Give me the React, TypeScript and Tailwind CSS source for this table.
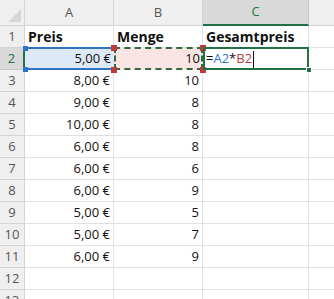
const rows: [string, string][] = [
  ["5,00 €", "10"],
  ["8,00 €", "10"],
  ["9,00 €", "8"],
  ["10,00 €", "8"],
  ["6,00 €", "8"],
  ["6,00 €", "6"],
  ["6,00 €", "9"],
  ["5,00 €", "5"],
  ["5,00 €", "7"],
  ["6,00 €", "9"],
];

const font = { fontFamily: "'Open Sans', 'Liberation Sans', sans-serif" };

function ColHeader({ label, active }: { label: string; active?: boolean }) {
  return (
    <div
      className={
        active
          ? "flex items-center justify-center border-r border-[#c6c6c6] border-b-2 border-b-[#217346] bg-[#d9d9d9] text-[13px] text-[#217346]"
          : "flex items-center justify-center border-r border-b border-[#d4d4d4] bg-[#efefef] text-[13px] text-[#555]"
      }
    >
      {label}
    </div>
  );
}

function RowHeader({ n, active }: { n: number; active?: boolean }) {
  return (
    <div
      className={
        active
          ? "flex items-center justify-center border-b border-[#c6c6c6] border-r-2 border-r-[#217346] bg-[#d9d9d9] text-[13px] text-[#217346]"
          : "flex items-center justify-center border-r border-b border-[#d4d4d4] bg-[#efefef] text-[13px] text-[#555]"
      }
    >
      {n}
    </div>
  );
}

function Cell({ children, right, bold }: { children?: React.ReactNode; right?: boolean; bold?: boolean }) {
  return (
    <div
      className={`flex items-center border-r border-b border-[#e1e1e1] px-[3px] text-[#111] ${
        right ? "justify-end" : "justify-start"
      } ${bold ? "text-[14px] font-bold" : "text-[13px]"}`}
    >
      {children}
    </div>
  );
}

export default function App() {
  return (
    <div className="h-[299px] w-[334px] overflow-hidden bg-white" style={font}>
      <div className="grid grid-cols-[25px_89px_89px_106px_40px] grid-rows-[26px_repeat(13,22px)]">
        {/* select-all corner */}
        <div className="flex items-end justify-end border-r border-b border-[#d4d4d4] bg-[#efefef] p-[3px]">
          <svg width="13" height="13" viewBox="0 0 13 13">
            <polygon points="13,0 13,13 0,13" fill="#d6d6d6" />
          </svg>
        </div>
        <ColHeader label="A" />
        <ColHeader label="B" />
        <ColHeader label="C" active />
        <ColHeader label="" />

        {/* row 1 */}
        <RowHeader n={1} />
        <Cell bold>Preis</Cell>
        <Cell bold>Menge</Cell>
        <Cell bold>Gesamtpreis</Cell>
        <Cell />

        {/* row 2 */}
        <RowHeader n={2} active />
        <div className="relative flex items-center justify-end bg-[#dde9f6] px-[3px] text-[13px] text-[#111]">
          <div className="absolute inset-x-0 -top-px -bottom-0 border-y-2 border-[#2e75c6]" />
          <span className="absolute -left-[2px] -top-[2px] h-[5px] w-[5px] bg-[#2e75c6]" />
          <span className="absolute -left-[2px] -bottom-[2px] h-[5px] w-[5px] bg-[#2e75c6]" />
          <span className="relative">{rows[0][0]}</span>
        </div>
        <div className="relative flex items-center justify-end bg-[#fbe4e4] px-[3px] text-[13px] text-[#111]">
          <div className="absolute inset-0 -top-px border-2 border-dashed border-[#2f6b3a]" />
          <span className="absolute -left-[3px] -top-[3px] h-[6px] w-[6px] bg-[#c0393b]" />
          <span className="absolute -right-[3px] -top-[3px] h-[6px] w-[6px] bg-[#c0393b]" />
          <span className="absolute -left-[3px] -bottom-[3px] h-[6px] w-[6px] bg-[#c0393b]" />
          <span className="absolute -right-[3px] -bottom-[3px] h-[6px] w-[6px] bg-[#c0393b]" />
          <span className="relative">{rows[0][1]}</span>
        </div>
        <div className="relative flex items-center px-[3px] text-[13px] text-[#111]">
          <div className="absolute inset-0 -top-px border-2 border-[#217346]" />
          <span className="absolute -right-[3px] -bottom-[3px] h-[6px] w-[6px] border border-white bg-[#217346]" />
          <span className="relative">
            =<span className="text-[#2e75c6]">A2</span>*<span className="text-[#c0393b]">B2</span>
          </span>
          <span className="relative ml-px h-[17px] w-px bg-[#111]" />
        </div>
        <Cell />

        {rows.slice(1).map(([price, qty], i) => (
          <div key={i} className="contents">
            <RowHeader n={i + 3} />
            <Cell right>{price}</Cell>
            <Cell right>{qty}</Cell>
            <Cell />
            <Cell />
          </div>
        ))}

        {[12, 13].map((n) => (
          <div key={n} className="contents">
            <RowHeader n={n} />
            <Cell />
            <Cell />
            <Cell />
            <Cell />
          </div>
        ))}
      </div>
    </div>
  );
}
